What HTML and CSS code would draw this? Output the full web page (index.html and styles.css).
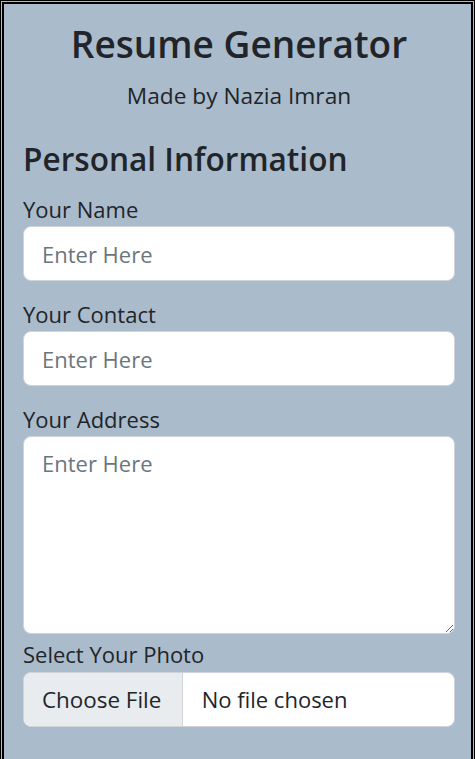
FILE: index.html
```html
<!DOCTYPE html>
<html lang="en">
<head>
<meta charset="utf-8">
<title>Resume Generator</title>
<link rel="stylesheet" href="styles.css">
</head>
<body>
<div class="frame">
  <div class="card">
    <h1 class="title">Resume Generator</h1>
    <p class="subtitle">Made by Nazia Imran</p>
    <h2 class="section">Personal Information</h2>
    <div class="field">
      <label class="label" for="name">Your Name</label>
      <input class="control" id="name" type="text" placeholder="Enter Here">
    </div>
    <div class="field">
      <label class="label" for="contact">Your Contact</label>
      <input class="control" id="contact" type="text" placeholder="Enter Here">
    </div>
    <div class="field">
      <label class="label" for="address">Your Address</label>
      <textarea class="control area" id="address" placeholder="Enter Here"></textarea>
    </div>
    <div class="field field-tight">
      <label class="label" for="photo">Select Your Photo</label>
      <input class="control file" id="photo" type="file">
    </div>
  </div>
</div>
</body>
</html>
```
FILE: styles.css
```css
* { box-sizing: border-box; }
html, body {
  margin: 0;
  padding: 0;
  background: #aabbcc;
}
body {
  font-family: "Open Sans", "Noto Sans", sans-serif;
  color: #212529;
}
.frame {
  border: 1px solid #000;
  border-bottom: none;
  padding: 1px 1px 0 1px;
  background: #aabbcc;
  min-height: 800px;
}
.card {
  border: 2px solid #000;
  border-bottom: none;
  background: #aabbcc;
  padding: 0 16px 40px 19px;
  min-height: 800px;
}
.title {
  margin: 15.5px 0 0;
  font-size: 37px;
  line-height: 48px;
  font-weight: 600;
  text-align: center;
}
.subtitle {
  margin: 13px 0 0;
  font-size: 22.7px;
  line-height: 30px;
  text-align: center;
}
.section {
  margin: 29px 0 0;
  font-size: 31.6px;
  line-height: 38px;
  font-weight: 600;
}
.field {
  display: flex;
  flex-direction: column;
}
.section + .field { margin-top: 18px; }
.field + .field { margin-top: 19.5px; }
.field + .field-tight { margin-top: 7px; }
.label {
  font-size: 22px;
  line-height: 26px;
  margin-bottom: 4.5px;
}
.control {
  display: block;
  width: 100%;
  height: 55px;
  padding: 10px 18px;
  font-family: inherit;
  font-size: 22px;
  line-height: 33px;
  color: #212529;
  background: #fff;
  border: 1px solid #ced4da;
  border-radius: 8px;
  outline: none;
}
.control::placeholder { color: #6c757d; opacity: 1; }
.area {
  height: 198px;
  resize: vertical;
}
.file {
  padding: 0;
  overflow: hidden;
}
.file::file-selector-button {
  height: 53px;
  margin: 0 19px 0 0;
  padding: 0 20.5px 0 18px;
  font-family: inherit;
  font-size: 22.4px;
  color: #212529;
  background: #e9ecef;
  border: none;
  border-right: 1px solid #ced4da;
  border-radius: 0;
}
```
